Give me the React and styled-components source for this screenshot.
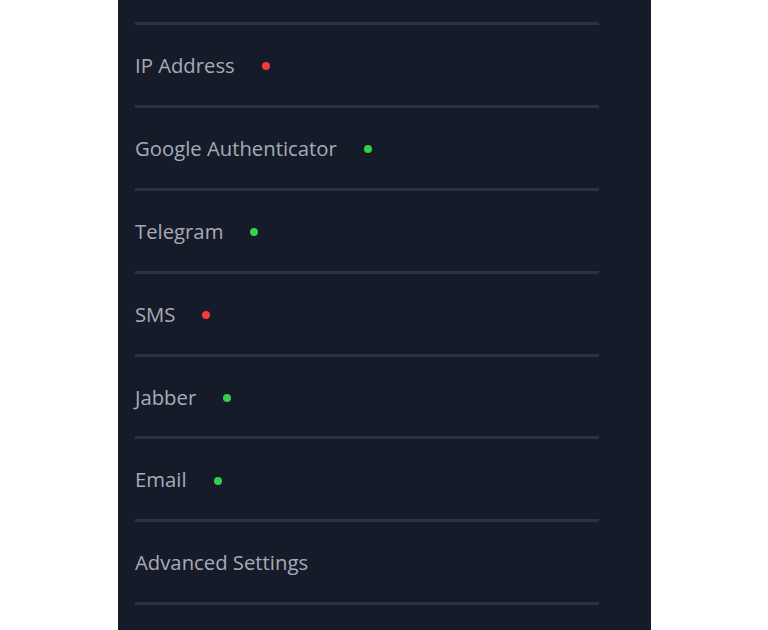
import React from "react";
import styled, { createGlobalStyle } from "styled-components";

const GlobalStyle = createGlobalStyle`
  html, body {
    margin: 0;
    padding: 0;
    background: #ffffff;
  }
  body {
    font-family: "Open Sans", "Noto Sans", sans-serif;
  }
`;

const Page = styled.div`
  width: 768px;
  height: 630px;
  display: flex;
  justify-content: flex-start;
  overflow: hidden;
`;

const Panel = styled.div`
  margin-left: 118px;
  width: 533px;
  height: 630px;
  background-color: #161b2a;
  padding: 22px 52px 0 17px;
  box-sizing: border-box;
`;

const List = styled.ul`
  list-style: none;
  margin: 0;
  padding: 0;
  border-bottom: 3px solid #2d313f;
`;

const Item = styled.li`
  height: 82.9px;
  box-sizing: border-box;
  border-top: 3px solid #2d313f;
  display: flex;
  align-items: center;
  color: #a6abb9;
  font-size: 20.3px;
`;

const Dot = styled.span`
  width: 8px;
  height: 8px;
  border-radius: 50%;
  margin-left: 27px;
  margin-top: 3px;
  background-color: ${(p) => (p.$on ? "#35cf4d" : "#f23c36")};
`;

const rows = [
  { label: "IP Address", on: false },
  { label: "Google Authenticator", on: true },
  { label: "Telegram", on: true },
  { label: "SMS", on: false },
  { label: "Jabber", on: true },
  { label: "Email", on: true },
  { label: "Advanced Settings" },
];

const App = () => {
  return (
    <>
      <GlobalStyle />
      <Page>
        <Panel>
          <List>
            {rows.map((r) => (
              <Item key={r.label}>
                {r.label}
                {r.on !== undefined && <Dot $on={r.on} />}
              </Item>
            ))}
          </List>
        </Panel>
      </Page>
    </>
  );
};

export default App;
